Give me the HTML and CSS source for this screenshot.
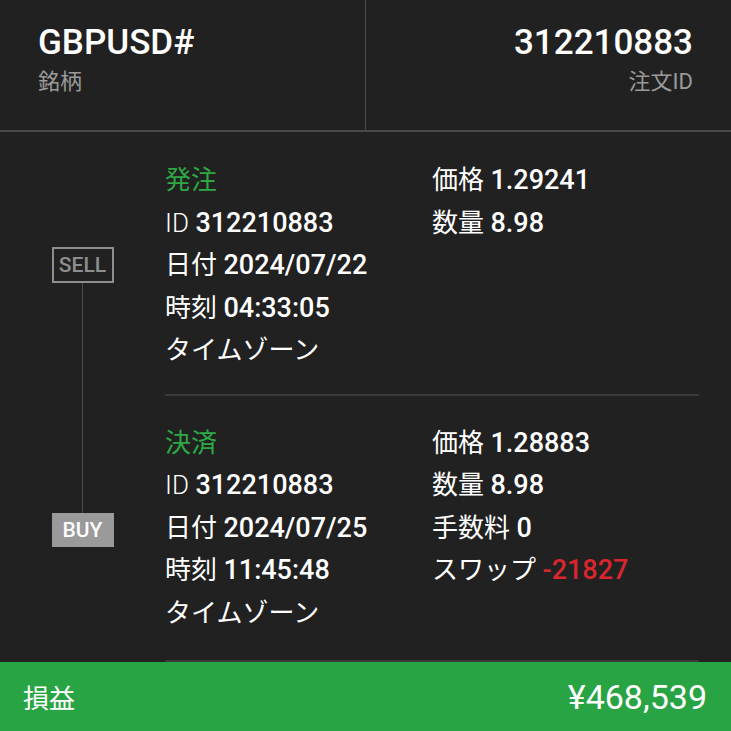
FILE: index.html
```html
<!DOCTYPE html>
<html lang="ja">

<head>
    <meta charset="UTF-8">
    <meta name="viewport" content="width=device-width, initial-scale=1.0">
    <title>取引詳細</title>
    <link rel="stylesheet" href="styles.css">
</head>

<body>
    <div class="page">
        <div class="header">
            <div class="head-cell">
                <div class="head-value">GBPUSD#</div>
                <div class="head-label">銘柄</div>
            </div>
            <div class="head-cell right">
                <div class="head-value">312210883</div>
                <div class="head-label">注文ID</div>
            </div>
        </div>

        <div class="detail">
            <div class="timeline">
                <div class="badge sell">SELL</div>
                <div class="line"></div>
                <div class="badge buy">BUY</div>
            </div>

            <div class="sections">
                <div class="section">
                    <div class="col">
                        <div class="row title">発注</div>
                        <div class="row"><span class="latin">ID</span> <b>312210883</b></div>
                        <div class="row">日付 <b>2024/07/22</b></div>
                        <div class="row">時刻 <b>04:33:05</b></div>
                        <div class="row">タイムゾーン</div>
                    </div>
                    <div class="col">
                        <div class="row">価格 <b>1.29241</b></div>
                        <div class="row">数量 <b>8.98</b></div>
                    </div>
                </div>

                <div class="section last">
                    <div class="col">
                        <div class="row title">決済</div>
                        <div class="row"><span class="latin">ID</span> <b>312210883</b></div>
                        <div class="row">日付 <b>2024/07/25</b></div>
                        <div class="row">時刻 <b>11:45:48</b></div>
                        <div class="row">タイムゾーン</div>
                    </div>
                    <div class="col">
                        <div class="row">価格 <b>1.28883</b></div>
                        <div class="row">数量 <b>8.98</b></div>
                        <div class="row">手数料 <b>0</b></div>
                        <div class="row">スワップ <b class="minus">-21827</b></div>
                    </div>
                </div>
            </div>
        </div>

        <div class="footer">
            <span class="footer-label">損益</span>
            <span class="footer-value">¥468,539</span>
        </div>
    </div>
</body>

</html>
```

FILE: styles.css
```css
body {
    margin: 0;
    background-color: #212121;
    color: #ffffff;
    font-family: Roboto, "Noto Sans CJK JP", sans-serif;
}

.page {
    height: 731px;
    display: flex;
    flex-direction: column;
}

.header {
    height: 130px;
    display: flex;
    border-bottom: 2px solid #4a4a4a;
}

.head-cell {
    flex: 1;
    padding: 24px 38px 0 38px;
}

.head-cell.right {
    border-left: 1px solid #4a4a4a;
    text-align: right;
    padding-right: 38px;
}

.head-value {
    font-size: 35px;
    font-weight: 500;
    line-height: 38px;
}

.head-label {
    font-size: 22px;
    color: #9a9a9a;
    line-height: 40px;
}

.detail {
    flex: 1;
    display: flex;
}

.timeline {
    width: 165px;
    display: flex;
    flex-direction: column;
    align-items: center;
    padding-top: 115px;
}

.badge {
    width: 62px;
    box-sizing: border-box;
    text-align: center;
    font-size: 21px;
    font-weight: 500;
}

.badge.sell {
    height: 36px;
    line-height: 32px;
    border: 2px solid #8e8e8e;
    color: #8e8e8e;
}

.badge.buy {
    height: 34px;
    line-height: 34px;
    background-color: #9a9a9a;
    color: #ffffff;
}

.line {
    width: 1px;
    height: 230px;
    background-color: #4a4a4a;
}

.sections {
    flex: 1;
    padding-right: 32px;
    display: flex;
    flex-direction: column;
}

.section {
    display: flex;
    padding: 27px 0 22px 0;
    border-bottom: 2px solid #3a3a3a;
}

.section.last {
    flex: 1;
    padding-top: 26px;
    padding-bottom: 0;
}

.col {
    width: 267px;
}

.row {
    font-size: 26px;
    line-height: 42.5px;
    white-space: nowrap;
}

.row .latin {
    font-weight: 300;
}

.row b {
    font-size: 27px;
    font-weight: 500;
}

.row.title {
    color: #2ea844;
}

.minus {
    color: #d9262e;
}

.footer {
    height: 69px;
    background-color: #29a444;
    display: flex;
    justify-content: space-between;
    align-items: center;
    padding: 0 24px 0 23px;
}

.footer-label {
    font-size: 26px;
}

.footer-value {
    font-size: 34px;
}
```
